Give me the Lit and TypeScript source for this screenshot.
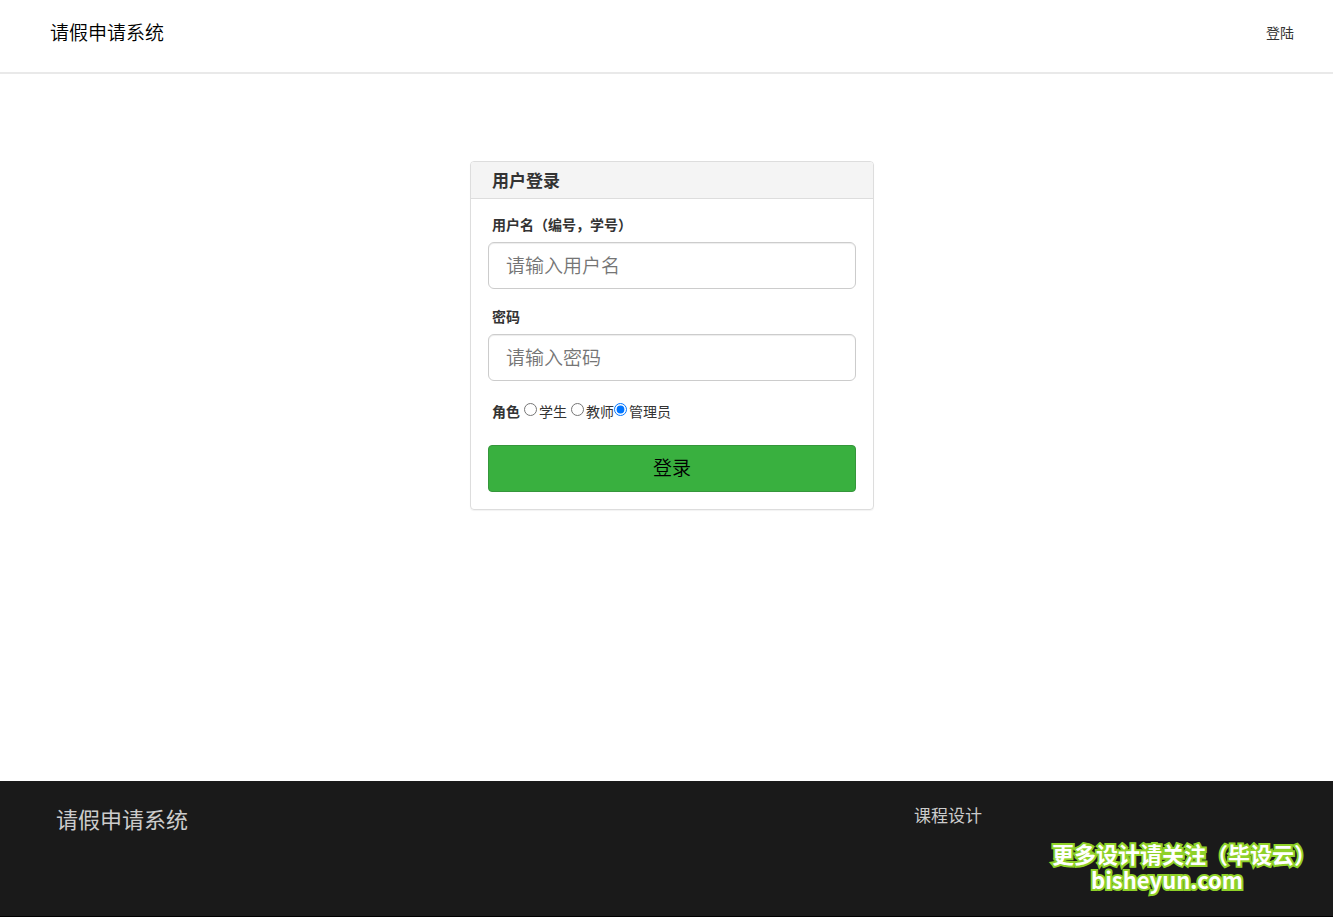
import { LitElement, html, css } from "lit";
import { customElement, state } from "lit/decorators.js";

@customElement("app-root")
class AppRoot extends LitElement {
  @state() private role = "admin";

  static styles = css`
    :host {
      display: flex;
      flex-direction: column;
      min-height: 100vh;
      box-sizing: border-box;
      background: #fff;
      color: #333;
      font-family: "Noto Sans CJK SC", sans-serif;
      font-size: 14px;
      font-weight: 400;
      line-height: 20px;
    }
    * {
      box-sizing: border-box;
    }
    .top {
      display: flex;
      justify-content: space-between;
      align-items: center;
      height: 74px;
      padding: 0 39px 8px 50px;
      border-bottom: 2px solid #e9e9e9;
    }
    a {
      color: inherit;
      text-decoration: none;
    }
    .brand {
      font-size: 19px;
      font-weight: 350;
      color: #000;
    }
    main {
      flex: 1;
      display: flex;
      justify-content: center;
      align-items: flex-start;
      padding: 87px 0 40px 11px;
    }
    .card {
      width: 404px;
      border: 1px solid #ddd;
      border-radius: 4px;
      box-shadow: 0 1px 1px rgba(0, 0, 0, 0.05);
    }
    .title {
      margin: 0;
      padding: 8px 21px;
      border-bottom: 1px solid #ddd;
      border-radius: 3px 3px 0 0;
      background: #f4f4f4;
      font-size: 17px;
      font-weight: 700;
      line-height: 20px;
    }
    form {
      display: flex;
      flex-direction: column;
      gap: 17px;
      padding: 15px 17px 17px;
    }
    .field {
      display: flex;
      flex-direction: column;
      gap: 8px;
    }
    .label {
      padding-left: 4px;
      font-weight: 600;
    }
    .box {
      width: 100%;
      height: 47px;
      padding: 0 17px 3px;
      border: 1px solid #ccc;
      border-radius: 6px;
      box-shadow: inset 0 1px 1px rgba(0, 0, 0, 0.075);
      background: #fff;
      color: #555;
      font: inherit;
      font-size: 19px;
      font-weight: 350;
    }
    .box::placeholder {
      color: #757575;
    }
    .roles {
      display: flex;
      align-items: center;
      height: 30px;
      margin: 0;
      padding-bottom: 4px;
    }
    .roles .label {
      margin-right: 4px;
    }
    .role {
      display: flex;
      align-items: center;
    }
    .role.spaced {
      margin-right: 4px;
    }
    .role input {
      width: 13px;
      height: 13px;
      margin: 0 2px 4px 0;
    }
    .submit {
      height: 47px;
      padding: 0 0 3px;
      border: 1px solid #35963b;
      border-radius: 4px;
      background: #39b03f;
      color: #000;
      font: inherit;
      font-size: 19px;
      font-weight: 350;
    }
    footer {
      position: relative;
      display: grid;
      grid-template-columns: 858fr 419fr;
      align-items: start;
      min-height: 136px;
      padding: 24px 0 0 56px;
      background: #1a1a1a;
      color: #ccc;
      border-bottom: 1px solid #000;
    }
    .site {
      font-size: 22px;
      line-height: 26px;
    }
    .course {
      font-size: 17px;
      line-height: 20px;
    }
    .mark {
      position: absolute;
      right: 17px;
      bottom: 24px;
      color: #fff;
      font-size: 22px;
      font-weight: 700;
      line-height: 26px;
      white-space: nowrap;
      paint-order: stroke fill;
      -webkit-text-stroke: 4px #8fd128;
    }
    .mark span {
      display: block;
    }
    .mark .url {
      padding-left: 39px;
    }
  `;

  private radio(value: string, text: string, spaced: boolean) {
    return html`<label class="role ${spaced ? "spaced" : ""}"
      ><input
        type="radio"
        name="role"
        .value=${value}
        .checked=${this.role === value}
        @change=${() => (this.role = value)}
      />${text}</label
    >`;
  }

  render() {
    return html`
      <header class="top">
        <a class="brand" href="#">请假申请系统</a>
        <a href="#">登陆</a>
      </header>
      <main>
        <section class="card">
          <h3 class="title">用户登录</h3>
          <form @submit=${(e: Event) => e.preventDefault()}>
            <div class="field">
              <label class="label" for="user">用户名（编号，学号）</label>
              <input class="box" id="user" type="text" placeholder="请输入用户名" />
            </div>
            <div class="field">
              <label class="label" for="pass">密码</label>
              <input class="box" id="pass" type="password" placeholder="请输入密码" />
            </div>
            <div class="roles" role="radiogroup" aria-labelledby="role-label">
              <span class="label" id="role-label">角色</span>
              ${this.radio("student", "学生", true)}
              ${this.radio("teacher", "教师", false)}
              ${this.radio("admin", "管理员", false)}
            </div>
            <button class="submit" type="submit">登录</button>
          </form>
        </section>
      </main>
      <footer>
        <div class="site">请假申请系统</div>
        <div class="course">课程设计</div>
        <div class="mark">
          <span>更多设计请关注（毕设云）</span>
          <span class="url">bisheyun.com</span>
        </div>
      </footer>
    `;
  }
}
